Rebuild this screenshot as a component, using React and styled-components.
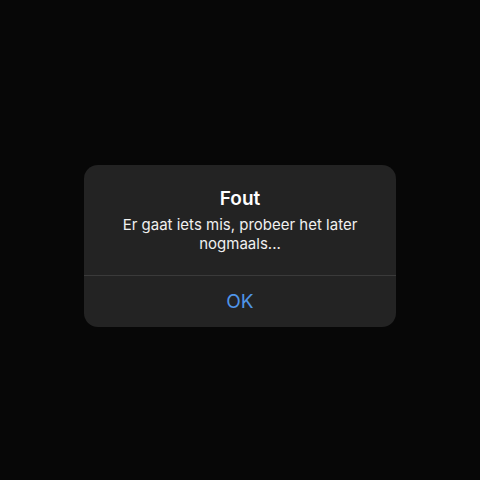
import React from "react";
import styled, { createGlobalStyle } from "styled-components";

const GlobalStyle = createGlobalStyle`
  html, body { margin: 0; padding: 0; background: #070707; }
  #root { height: 480px; }
`;

const Screen = styled.div`
  width: 480px;
  height: 480px;
  display: flex;
  align-items: center;
  justify-content: center;
  background: #070707;
  font-family: "Inter", "Liberation Sans", sans-serif;
`;

const Alert = styled.div`
  width: 312px;
  margin-top: 12px;
  background: #232323;
  border-radius: 14px;
  overflow: hidden;
  display: flex;
  flex-direction: column;
`;

const Body = styled.div`
  padding: 22px 12px 22px;
  display: flex;
  flex-direction: column;
  align-items: center;
  text-align: center;
  gap: 4px;
`;

const Title = styled.div`
  color: #ffffff;
  font-size: 19px;
  font-weight: 600;
  line-height: 24px;
`;

const Message = styled.div`
  color: #f0f0f0;
  font-size: 15px;
  line-height: 19px;
`;

const Divider = styled.div`
  height: 1px;
  background: #3a3a3a;
`;

const Button = styled.button`
  height: 51px;
  border: none;
  background: transparent;
  color: #4f94e8;
  font-family: inherit;
  font-size: 19px;
  padding: 0;
  cursor: pointer;
`;

export default function App() {
  return (
    <>
      <GlobalStyle />
      <Screen>
        <Alert>
          <Body>
            <Title>Fout</Title>
            <Message>
              Er gaat iets mis, probeer het later
              <br />
              nogmaals...
            </Message>
          </Body>
          <Divider />
          <Button>OK</Button>
        </Alert>
      </Screen>
    </>
  );
}
